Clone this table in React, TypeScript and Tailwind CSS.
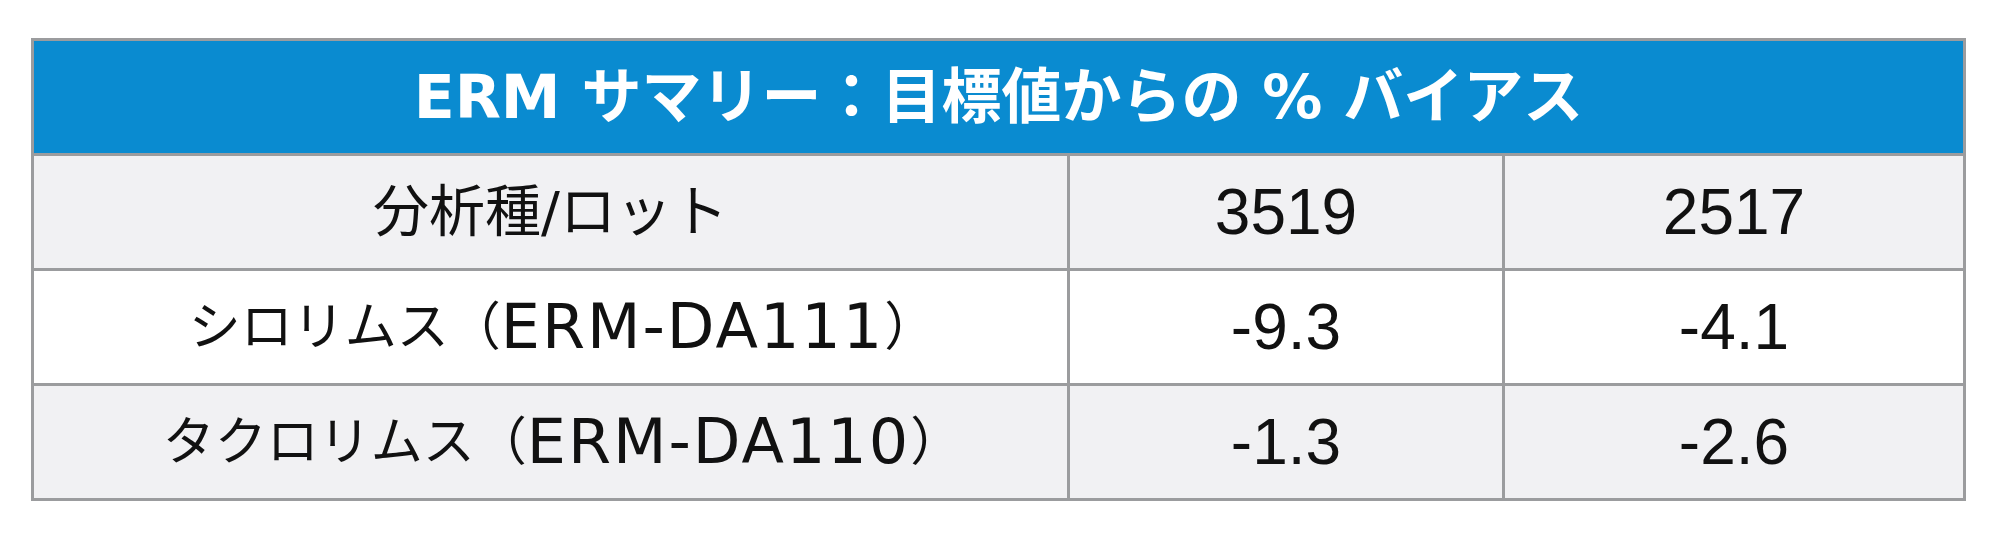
import React from "react";

const rows = [
  { kana: "分析種/ロット", latin: "", a: "3519", b: "2517", bg: "bg-[#f1f1f3]", size: "text-[56px]" },
  { kana: "シロリムス（", latin: "ERM-DA111", a: "-9.3", b: "-4.1", bg: "bg-white", size: "text-[52px]" },
  { kana: "タクロリムス（", latin: "ERM-DA110", a: "-1.3", b: "-2.6", bg: "bg-[#f1f1f3]", size: "text-[52px]" },
];

export default function App() {
  return (
    <div className="w-[2000px] h-[540px] bg-white pt-[38px] pl-[31px]">
      <div className="w-[1935px] grid grid-cols-[1033px_432px_458px] grid-rows-[112px_112px_112px_112px] gap-[3px] p-[3px] bg-[#9b9c9e]">
        <div className="col-span-3 bg-[#0a8bd0] flex items-center justify-center text-white font-bold text-[60px] leading-none font-['DejaVu_Sans','Noto_Sans_CJK_JP',sans-serif]">
          ERM サマリー：目標値からの % バイアス
        </div>
        {rows.map((r) => (
          <React.Fragment key={r.kana}>
            <div className={`${r.bg} ${r.size} flex items-center justify-center text-[#111] leading-none font-['DejaVu_Sans','Noto_Sans_CJK_JP',sans-serif]`}>
              <span>{r.kana}</span>
              {r.latin && (
                <>
                  <span className="text-[62px] tracking-[2px]">{r.latin}</span>
                  <span className="-mr-[24px]">）</span>
                </>
              )}
            </div>
            <div className={`${r.bg} flex items-center justify-center text-[#111] text-[64px] leading-none font-['Liberation_Sans',Arial,sans-serif]`}>
              {r.a}
            </div>
            <div className={`${r.bg} flex items-center justify-center text-[#111] text-[64px] leading-none font-['Liberation_Sans',Arial,sans-serif]`}>
              {r.b}
            </div>
          </React.Fragment>
        ))}
      </div>
    </div>
  );
}
